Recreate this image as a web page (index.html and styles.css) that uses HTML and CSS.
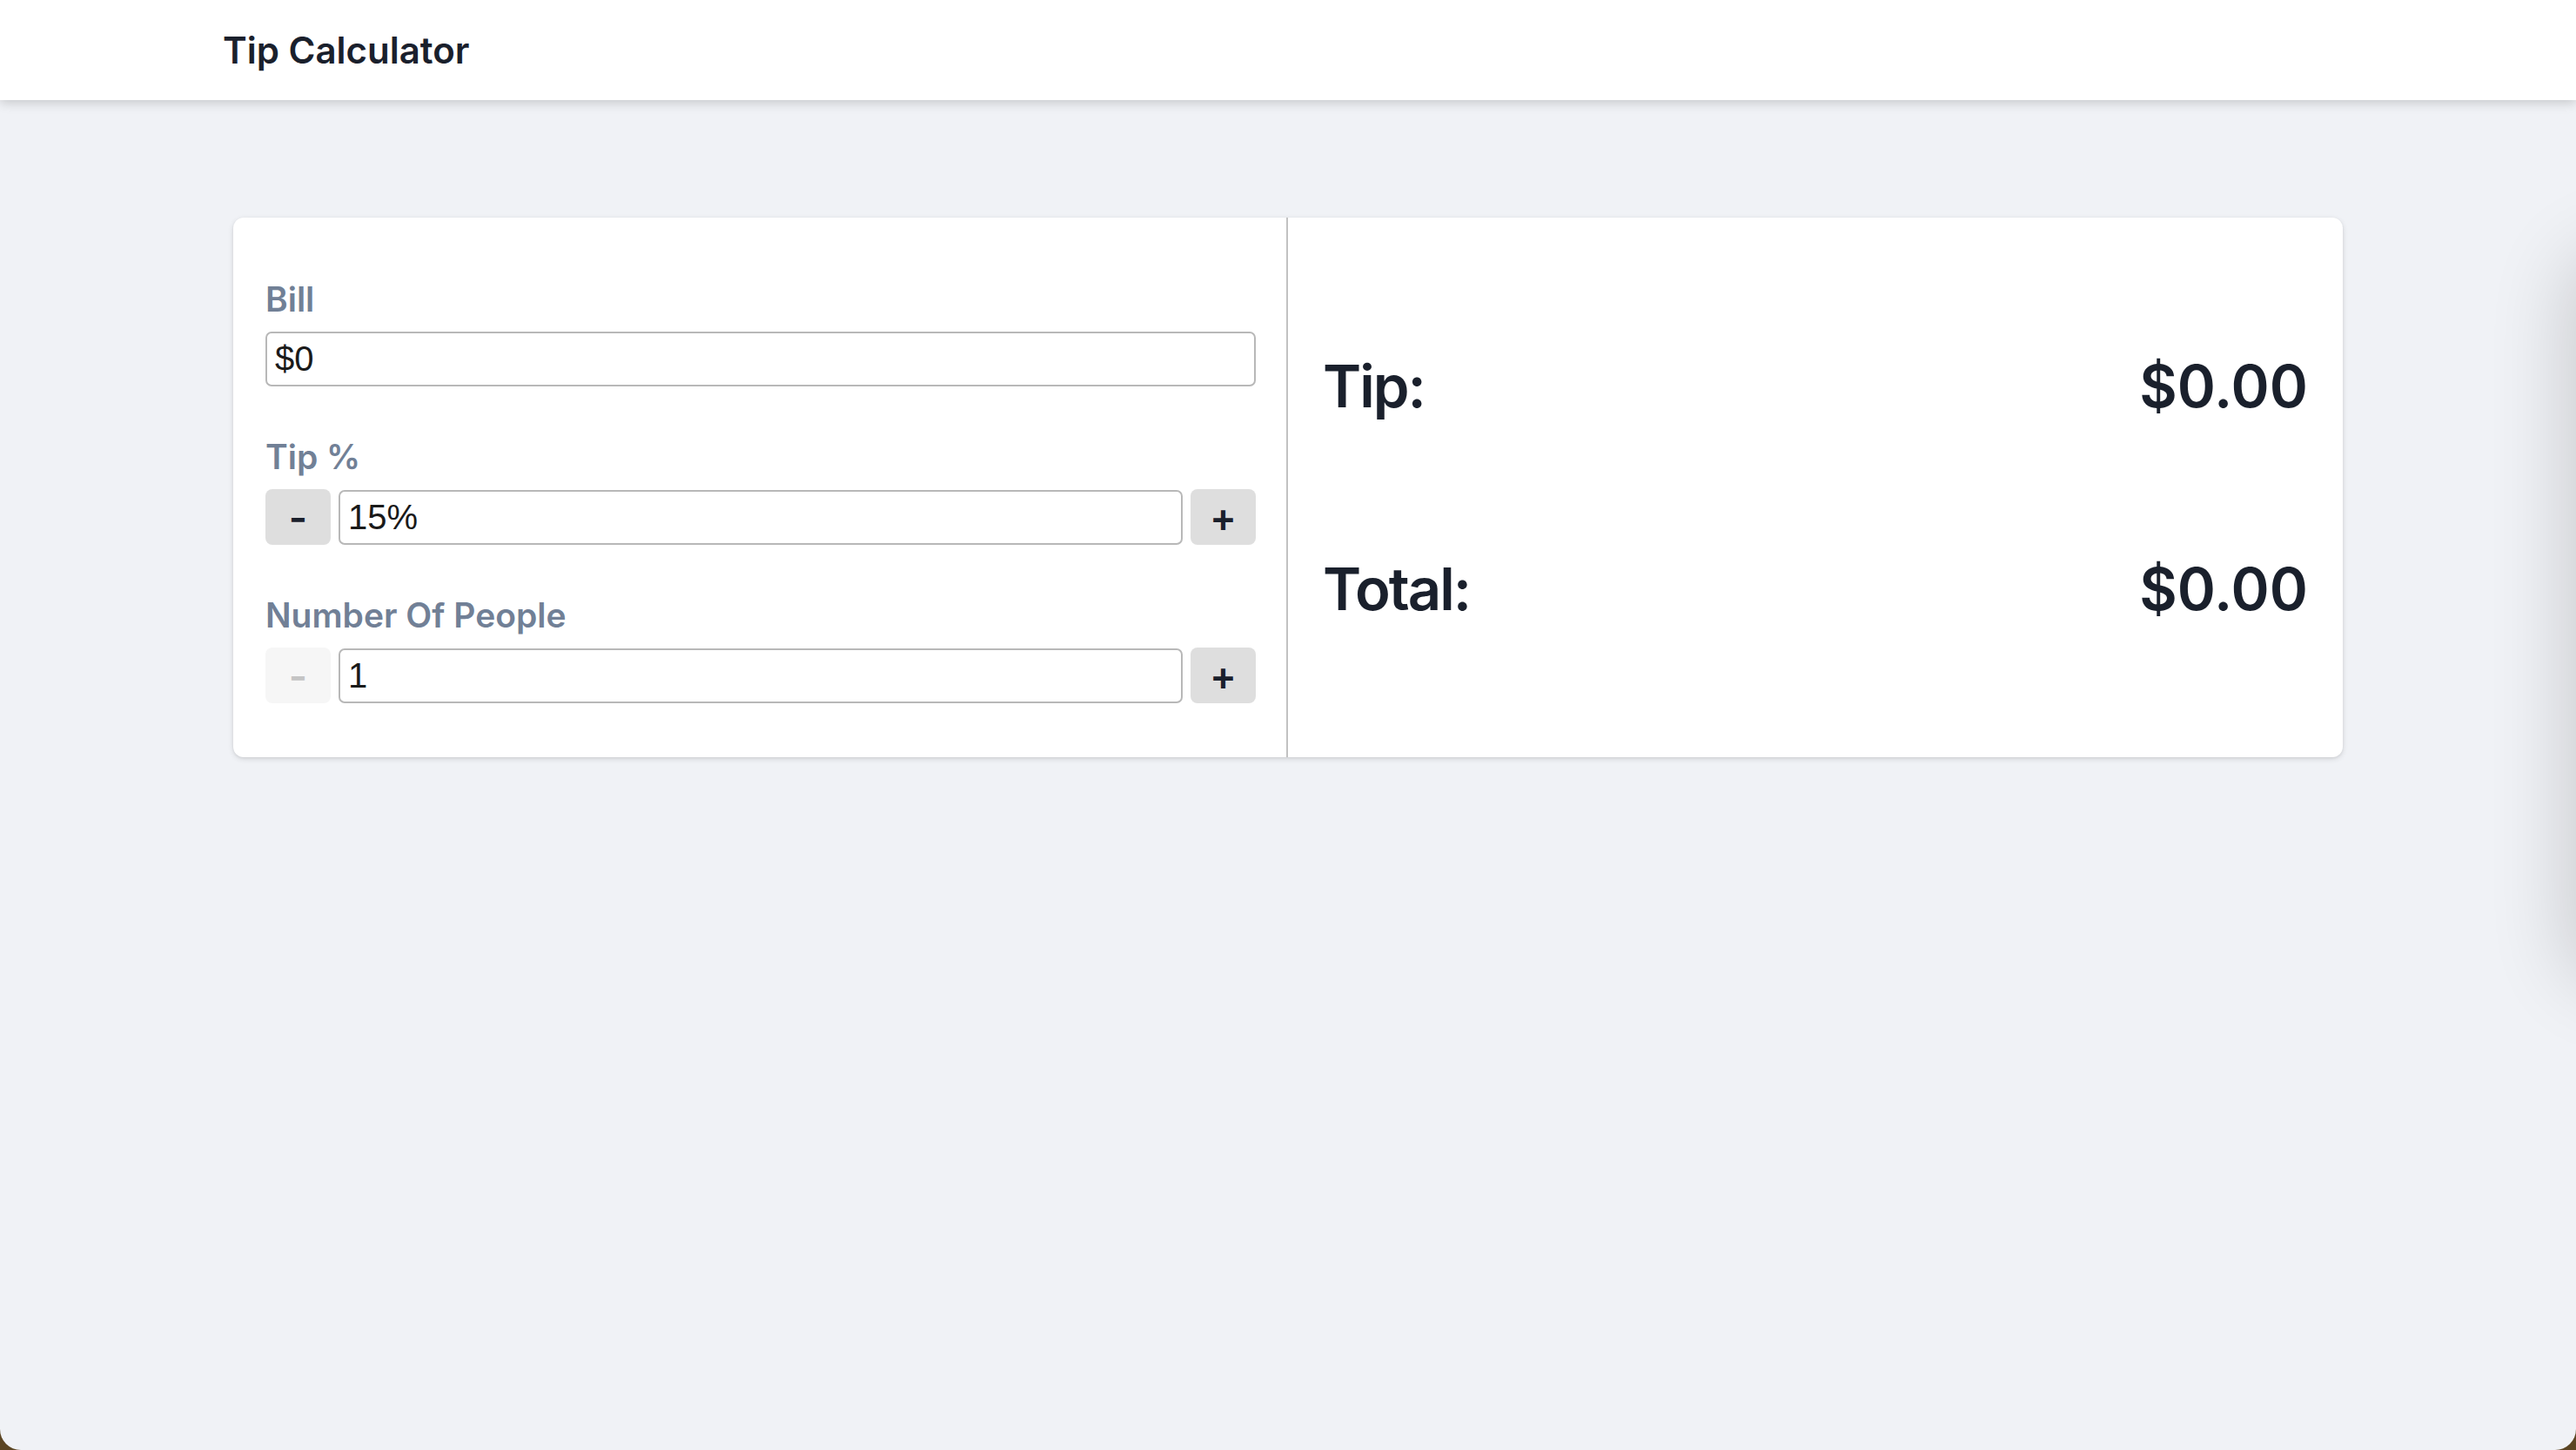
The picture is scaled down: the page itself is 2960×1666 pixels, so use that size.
FILE: index.html
```html
<!DOCTYPE html>
<html lang="en">
<head>
<meta charset="utf-8">
<title>Tip Calculator</title>
<link rel="stylesheet" href="styles.css">
</head>
<body>
<div class="window">
  <header class="topbar">
    <h1 class="title">Tip Calculator</h1>
  </header>
  <main class="page">
    <section class="card">
      <div class="inputs">
        <div class="field">
          <label class="label" for="bill">Bill</label>
          <input class="text-input" id="bill" type="text" value="$0">
        </div>
        <div class="field">
          <label class="label" for="tip">Tip %</label>
          <div class="stepper">
            <button class="step" type="button">-</button>
            <input class="text-input" id="tip" type="text" value="15%">
            <button class="step" type="button">+</button>
          </div>
        </div>
        <div class="field">
          <label class="label" for="people">Number Of People</label>
          <div class="stepper">
            <button class="step" type="button" disabled>-</button>
            <input class="text-input" id="people" type="text" value="1">
            <button class="step" type="button">+</button>
          </div>
        </div>
      </div>
      <div class="results">
        <div class="result-row"><span class="result-label">Tip:</span><span>$0.00</span></div>
        <div class="result-row"><span class="result-label">Total:</span><span>$0.00</span></div>
      </div>
    </section>
  </main>
  <aside class="drawer-shadow" aria-hidden="true"></aside>
</div>
</body>
</html>
```

FILE: styles.css
```css
html {
  margin: 0;
  background: #5b4523;
}
body {
  margin: 0;
  font-family: Inter, "Noto Sans", "DejaVu Sans", sans-serif;
  color: #1a202c;
}
.window {
  position: relative;
  min-height: 100vh;
  background: #f0f2f6;
  border-bottom-left-radius: 24px;
  border-bottom-right-radius: 24px;
  overflow: hidden;
}
.topbar {
  height: 115px;
  background: #ffffff;
  box-shadow: 0 3px 12px rgba(0, 0, 0, 0.18);
  display: flex;
  align-items: center;
  padding-left: 256px;
  position: relative;
  z-index: 2;
}
.title {
  margin: 0;
  font-size: 42px;
  font-weight: 600;
  color: #1a202c;
}
.page {
  padding-top: 135px;
}
.card {
  width: 2424px;
  margin: 0 auto;
  background: #ffffff;
  border-radius: 12px;
  box-shadow: 0 2px 6px rgba(0, 0, 0, 0.12), 0 1px 3px rgba(0, 0, 0, 0.06);
  display: grid;
  grid-template-columns: 1fr 1fr;
}
.inputs {
  padding: 67px 35px 62px 37px;
  border-right: 2px solid #c2c2c2;
}
.field + .field {
  margin-top: 54px;
}
.label {
  display: block;
  font-size: 39px;
  line-height: 54px;
  font-weight: 600;
  color: #718096;
  margin-bottom: 10px;
}
.text-input {
  display: block;
  box-sizing: border-box;
  width: 100%;
  height: 63px;
  margin: 0;
  padding: 0 9px;
  border: 2px solid #b8b8b8;
  border-radius: 7px;
  background: #ffffff;
  font-family: "Liberation Sans", Arial, sans-serif;
  font-size: 40px;
  color: #1a1a1a;
  outline: none;
}
.stepper {
  display: flex;
  align-items: center;
  gap: 9px;
}
.stepper .text-input {
  flex: 1;
  min-width: 0;
}
.step {
  flex: 0 0 75px;
  height: 64px;
  margin: 0;
  padding: 0;
  border: none;
  border-radius: 8px;
  background: #dedede;
  font-family: Inter, "Noto Sans", sans-serif;
  font-size: 46px;
  font-weight: 600;
  color: #1a202c;
  line-height: 1;
}
.step:disabled {
  background: #f6f6f6;
  color: #c4c4c4;
}
.results {
  padding: 0 40px;
  display: flex;
  flex-direction: column;
  justify-content: center;
  gap: 143px;
}
.result-row {
  display: flex;
  justify-content: space-between;
  align-items: center;
  font-size: 67px;
  line-height: 90px;
  font-weight: 600;
  color: #1a202c;
}
.result-label {
  letter-spacing: -2px;
}
.drawer-shadow {
  position: absolute;
  top: 300px;
  left: 100%;
  width: 400px;
  height: 820px;
  border-radius: 40px;
  background: #f0f2f6;
  box-shadow: 0 0 90px 10px rgba(0, 0, 0, 0.16);
}
```
